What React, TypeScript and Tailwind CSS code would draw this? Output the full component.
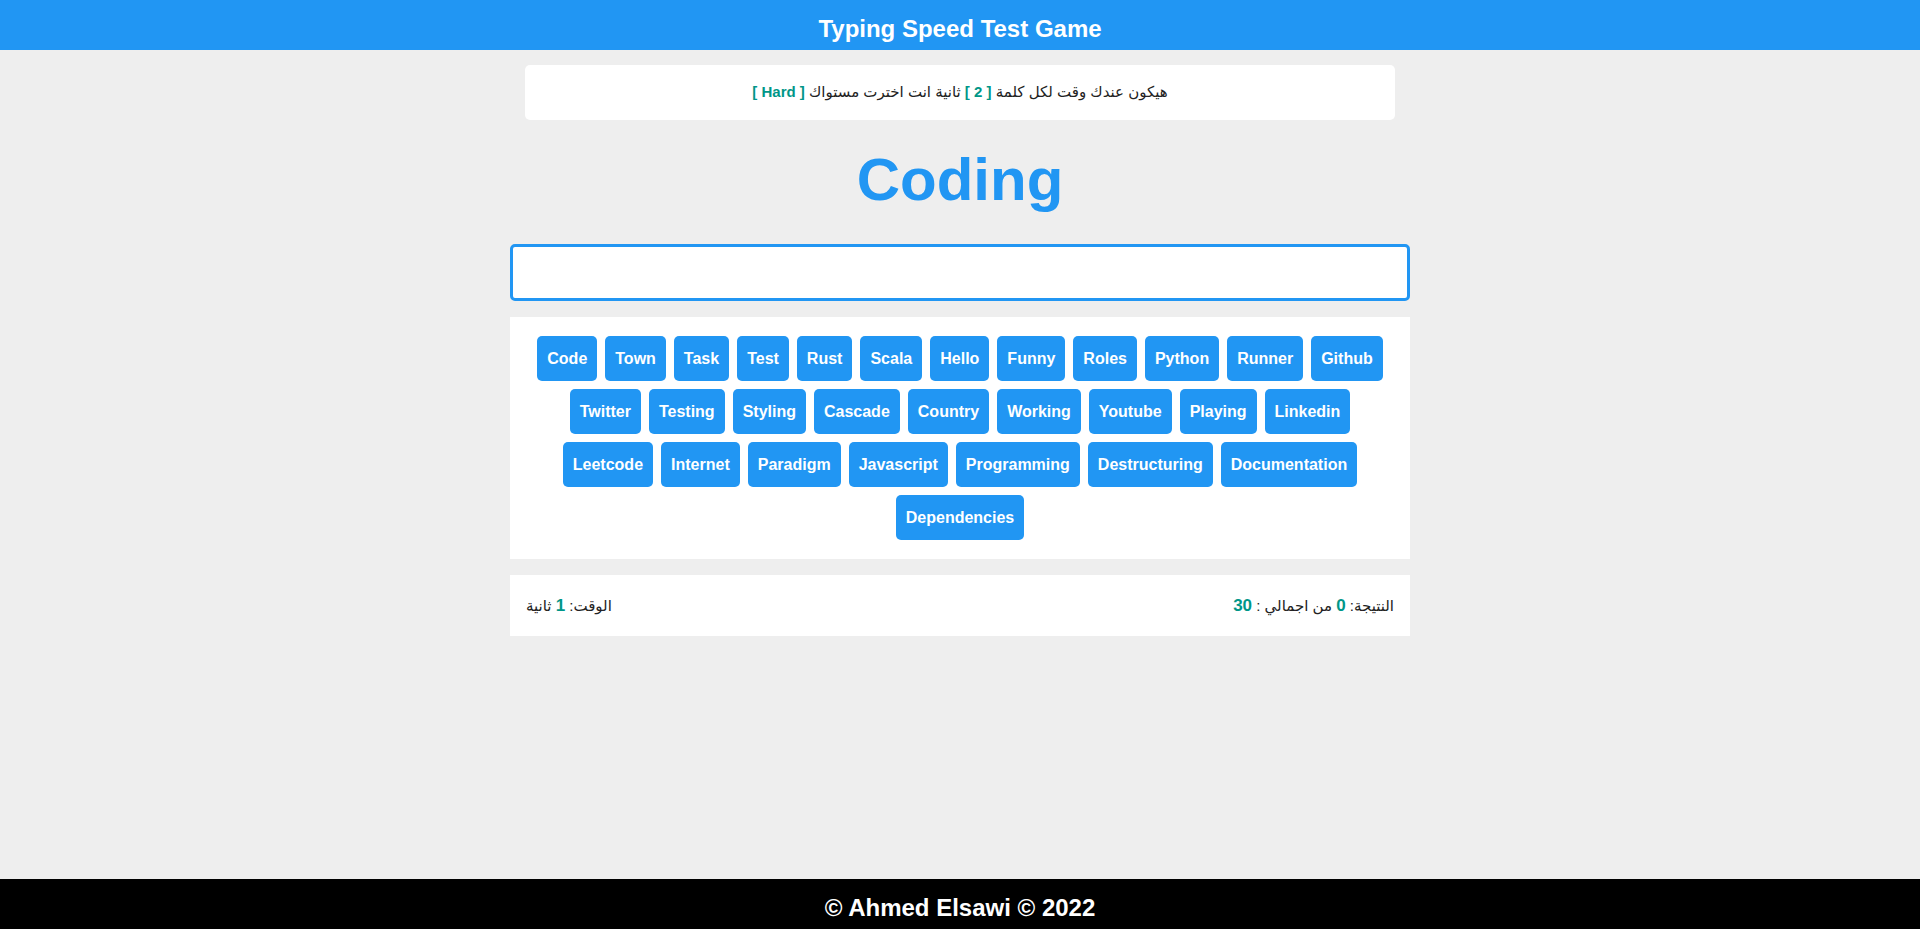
import { useState } from "react";

const words = [
  "Code", "Town", "Task", "Test", "Rust", "Scala", "Hello", "Funny", "Roles", "Python", "Runner", "Github",
  "Twitter", "Testing", "Styling", "Cascade", "Country", "Working", "Youtube", "Playing", "Linkedin",
  "Leetcode", "Internet", "Paradigm", "Javascript", "Programming", "Destructuring", "Documentation",
  "Dependencies",
];

const sans = "font-['Liberation_Sans','DejaVu_Sans',Arial,sans-serif]";

export default function App() {
  const [value, setValue] = useState("");

  return (
    <div className={`min-h-screen flex flex-col bg-[#eeeeee] text-[#222] ${sans}`}>
      {/* Header */}
      <header className="h-[50px] pt-[8px] bg-[#2196f3] flex items-center justify-center">
        <h1 className="text-white text-[24px] font-bold leading-none">Typing Speed Test Game</h1>
      </header>

      <main className="w-[900px] mx-auto flex flex-col items-center">
        {/* Instructions */}
        <div
          dir="rtl"
          className="mt-[15px] w-[870px] h-[55px] bg-white rounded-[5px] flex items-center justify-center text-[15px]"
        >
          <span>
            هيكون عندك وقت لكل كلمة{" "}
            <span className="text-[#009688] font-bold">[ 2 ]</span> ثانية انت اخترت مستواك{" "}
            <span className="text-[#009688] font-bold">[ Hard ]</span>
          </span>
        </div>

        {/* Current word */}
        <div className="mt-[30px] text-[60px] leading-none font-bold text-[#2196f3]">Coding</div>

        {/* Input */}
        <input
          type="text"
          value={value}
          onChange={e => setValue(e.target.value)}
          className="mt-[34px] w-[900px] h-[57px] bg-white border-[3px] border-[#2196f3] rounded-[5px] outline-none px-3 text-[20px]"
        />

        {/* Upcoming words */}
        <div className="mt-[16px] w-[900px] bg-white py-[19px] px-[20px] flex flex-wrap justify-center gap-[8px]">
          {words.map(word => (
            <div
              key={word}
              className="bg-[#2196f3] text-white font-bold text-[16px] leading-[25px] px-[10px] py-[10px] rounded-[5px]"
            >
              {word}
            </div>
          ))}
        </div>

        {/* Stats */}
        <div
          dir="rtl"
          className="mt-[16px] w-[900px] h-[61px] bg-white px-4 flex items-center justify-between text-[15px]"
        >
          <span>
            النتيجة: <span className="text-[#009688] font-bold text-[17px]">0</span> من اجمالي :{" "}
            <span className="text-[#009688] font-bold text-[17px]">30</span>
          </span>
          <span>
            الوقت: <span className="text-[#009688] font-bold text-[17px]">1</span> ثانية
          </span>
        </div>
      </main>

      {/* Footer */}
      <footer className="mt-auto h-[50px] pt-[8px] bg-black flex items-center justify-center">
        <span className="text-white text-[24px] font-bold leading-none">© Ahmed Elsawi © 2022</span>
      </footer>
    </div>
  );
}
